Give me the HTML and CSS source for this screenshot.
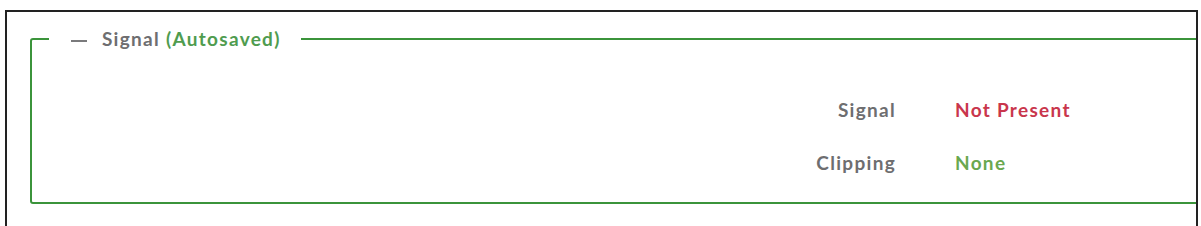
FILE: index.html
```html
<!DOCTYPE html>
<html lang="en">
  <head>
    <meta charset="UTF-8" />
    <meta name="viewport" content="width=device-width, initial-scale=1.0" />
    <title>Signal</title>

    <link rel="stylesheet" href="styles.css">
  </head>

  <body>
    <div class="panel">
      <fieldset class="signal-box">
        <legend>
          <span class="collapse"></span>
          <span class="legend-title">Signal</span>
          <span class="legend-saved">(Autosaved)</span>
        </legend>

        <div class="status">
          <span class="status-label">Signal</span>
          <span class="status-value bad">Not Present</span>

          <span class="status-label">Clipping</span>
          <span class="status-value good">None</span>
        </div>
      </fieldset>
    </div>
  </body>
</html>
```

FILE: styles.css
```css
* {
  margin: 0;
  padding: 0;
  box-sizing: border-box;
  font-family: Lato, "Open Sans", sans-serif;
}

body {
  background-color: #fff;
  height: 226px;
  overflow: hidden;
}

.panel {
  margin: 10px 3px 0 5px;
  height: 216px;
  border: 2px solid #222;
  border-bottom: none;
  overflow: hidden;
}

.signal-box {
  margin: 16px -30px 0 23px;
  border: 2px solid #3b943b;
  border-radius: 3px;
  padding: 0 0 28px 0;
}

legend {
  margin-left: 17px;
  padding: 0 20px 0 22px;
  font-size: 19px;
  font-weight: bold;
  line-height: 22px;
  letter-spacing: 1.3px;
  color: #6e6e70;
}

.collapse {
  display: inline-block;
  width: 16px;
  height: 2px;
  margin-right: 9px;
  vertical-align: middle;
  background-color: #7a7a7c;
}

.legend-saved {
  color: #4f9c4f;
}

.status {
  display: grid;
  grid-template-columns: 864px auto;
  column-gap: 59px;
  row-gap: 31px;
  padding-top: 49px;
  font-size: 19px;
  font-weight: bold;
  line-height: 22px;
  letter-spacing: 1.3px;
}

.status-label {
  text-align: right;
  color: #6e6e70;
}

.bad {
  color: #c9364c;
}

.good {
  color: #6aa84f;
}
```
